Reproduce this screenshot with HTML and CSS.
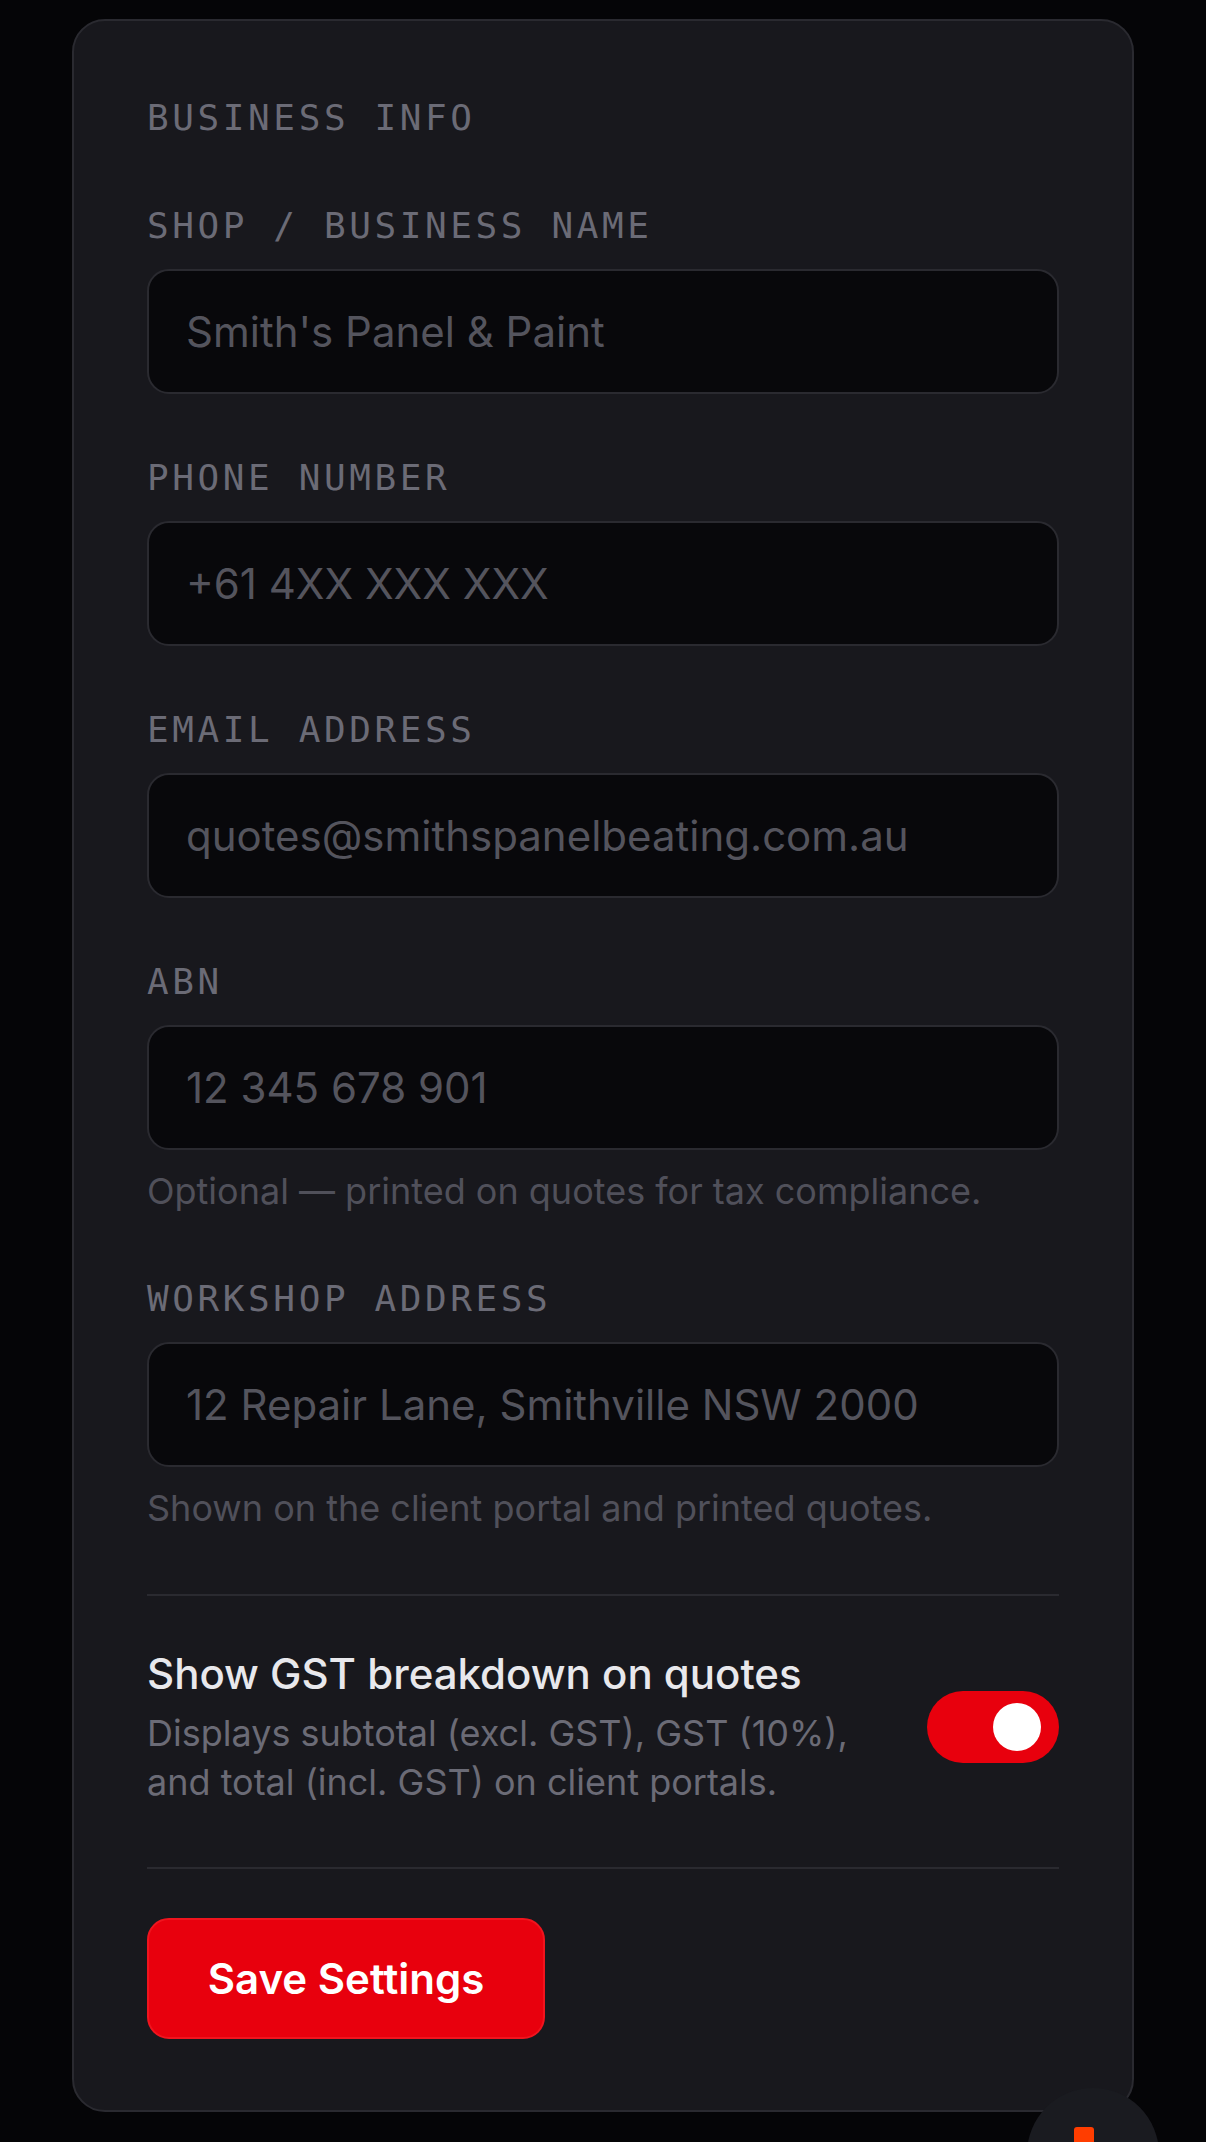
FILE: index.html
```html
<!DOCTYPE html>
<html lang="en">
<head>
<meta charset="UTF-8" />
<meta name="viewport" content="width=device-width, initial-scale=1" />
<title>Settings</title>
<link rel="stylesheet" href="styles.css">
</head>
<body>

<form class="card">
  <h2 class="section-title">BUSINESS INFO</h2>

  <div class="field">
    <label class="field-label" for="shopName">SHOP / BUSINESS NAME</label>
    <input class="field-input" id="shopName" type="text" placeholder="Smith's Panel &amp; Paint" />
  </div>

  <div class="field">
    <label class="field-label" for="phone">PHONE NUMBER</label>
    <input class="field-input" id="phone" type="text" placeholder="+61 4XX XXX XXX" />
  </div>

  <div class="field">
    <label class="field-label" for="email">EMAIL ADDRESS</label>
    <input class="field-input" id="email" type="text" placeholder="quotes@smithspanelbeating.com.au" />
  </div>

  <div class="field">
    <label class="field-label" for="abn">ABN</label>
    <input class="field-input" id="abn" type="text" placeholder="12 345 678 901" />
    <p class="field-hint">Optional — printed on quotes for tax compliance.</p>
  </div>

  <div class="field">
    <label class="field-label" for="address">WORKSHOP ADDRESS</label>
    <input class="field-input" id="address" type="text" placeholder="12 Repair Lane, Smithville NSW 2000" />
    <p class="field-hint">Shown on the client portal and printed quotes.</p>
  </div>

  <div class="toggle-row">
    <div class="toggle-text">
      <div class="toggle-title">Show GST breakdown on quotes</div>
      <div class="toggle-desc">Displays subtotal (excl. GST), GST (10%), and total (incl. GST) on client portals.</div>
    </div>
    <span class="toggle"><span class="toggle-knob"></span></span>
  </div>

  <button class="btn-save" type="button">Save Settings</button>
</form>

<!-- floating help button, cut off by the bottom of the window -->
<div class="fab"><span class="fab-mark"></span></div>

</body>
</html>
```

FILE: styles.css
```css
html, body { height: 100%; }
body {
  margin: 0;
  padding: 19px 72px 0;
  background: #050507;
  font-family: Inter, "Liberation Sans", sans-serif;
  overflow: hidden;
}

.card {
  background: #18181d;
  border: 2px solid #2a2a30;
  border-radius: 33px;
  padding: 75px 73px 72px;
  height: 2093px;
  box-sizing: border-box;
}

.section-title, .field-label {
  display: block;
  margin: 0;
  font-family: "DejaVu Sans Mono", monospace;
  font-size: 36px;
  font-weight: 400;
  line-height: 44px;
  letter-spacing: 0.1em;
  color: #6b6b76;
}
.section-title { margin-bottom: 64px; }

.field { margin-bottom: 62px; }
.field-label { margin-bottom: 21px; }

.field-input {
  display: block;
  width: 100%;
  height: 125px;
  box-sizing: border-box;
  padding: 0 37px;
  background: #08080b;
  border: 2px solid #2a2a30;
  border-radius: 22px;
  font-family: inherit;
  font-size: 42px;
  color: #e8e8ec;
}
.field-input::placeholder { color: #54545d; opacity: 1; }

.field-hint {
  margin: 17px 0 0;
  font-size: 36px;
  line-height: 48px;
  color: #50505a;
}

.toggle-row {
  display: flex;
  align-items: center;
  justify-content: space-between;
  border-top: 2px solid #2a2a30;
  border-bottom: 2px solid #2a2a30;
  height: 275px;
  padding-bottom: 10px;
  box-sizing: border-box;
  margin-bottom: 49px;
}
.toggle-text { width: 730px; }
.toggle-title {
  font-size: 42px;
  font-weight: 500;
  line-height: 54px;
  color: #e8e8ec;
}
.toggle-desc {
  margin-top: 8px;
  font-size: 36px;
  line-height: 49px;
  color: #6b6b76;
}
.toggle {
  display: flex;
  justify-content: flex-end;
  align-items: center;
  width: 132px;
  height: 72px;
  padding-right: 18px;
  box-sizing: border-box;
  background: #e8000d;
  border-radius: 36px;
}
.toggle-knob {
  width: 48px;
  height: 48px;
  border-radius: 50%;
  background: #fff;
}

.btn-save {
  display: block;
  width: 398px;
  height: 121px;
  padding: 0;
  background: #e8000d;
  border: 2px solid #f0141e;
  border-radius: 22px;
  font-family: inherit;
  font-size: 42px;
  font-weight: 600;
  color: #fff;
}

.fab {
  position: fixed;
  left: 1027px;
  top: 2088px;
  width: 132px;
  height: 132px;
  border-radius: 50%;
  background: #1a1b20;
}
.fab-mark {
  position: absolute;
  left: 47px;
  top: 39px;
  width: 20px;
  height: 40px;
  border-radius: 3px;
  background: #ff3d00;
}
```
